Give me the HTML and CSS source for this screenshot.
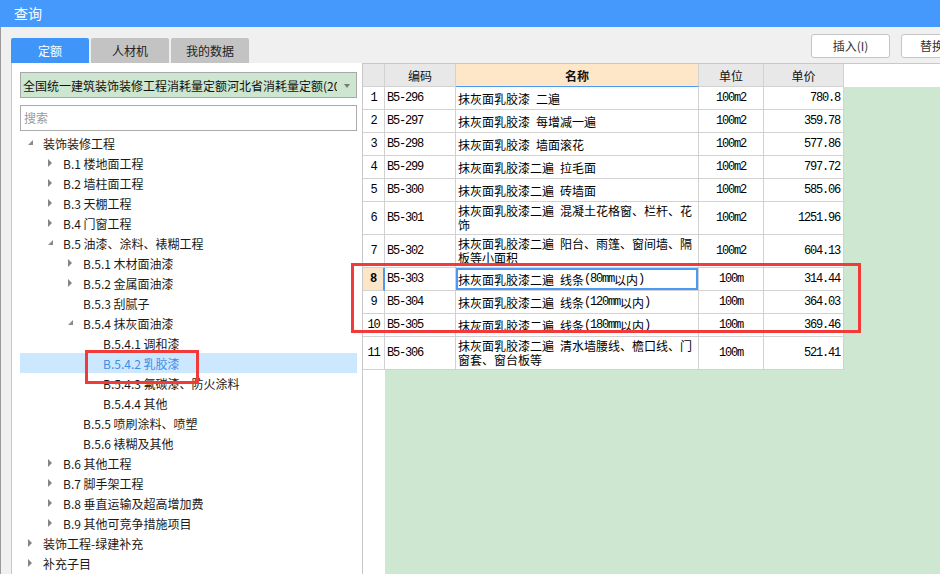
FILE: index.html
```html
<!DOCTYPE html>
<html lang="zh-CN">
<head>
<meta charset="utf-8">
<title>查询</title>
<link rel="stylesheet" href="styles.css">
</head>
<body>
<div class="titlebar">查询</div>
<div class="main">
  <div class="topbar">
    <div class="tabs">
      <div class="tab active">定额</div>
      <div class="tab">人材机</div>
      <div class="tab">我的数据</div>
    </div>
    <div class="btns">
      <div class="btn">插入(I)</div>
      <div class="btn btn-short">替换</div>
    </div>
  </div>
  <div class="content">
    <div class="left">
      <div class="select"><span class="select-text">全国统一建筑装饰装修工程消耗量定额河北省消耗量定额(2012)</span><span class="caret"></span></div>
      <div class="search">搜索</div>
      <div class="tree">
        <div class="node l0"><span class="arr"><i class="open"></i></span>装饰装修工程</div>
        <div class="node l1"><span class="arr"><i class="closed"></i></span>B.1 楼地面工程</div>
        <div class="node l1"><span class="arr"><i class="closed"></i></span>B.2 墙柱面工程</div>
        <div class="node l1"><span class="arr"><i class="closed"></i></span>B.3 天棚工程</div>
        <div class="node l1"><span class="arr"><i class="closed"></i></span>B.4 门窗工程</div>
        <div class="node l1"><span class="arr"><i class="open"></i></span>B.5 油漆、涂料、裱糊工程</div>
        <div class="node l2"><span class="arr"><i class="closed"></i></span>B.5.1 木材面油漆</div>
        <div class="node l2"><span class="arr"><i class="closed"></i></span>B.5.2 金属面油漆</div>
        <div class="node l2"><span class="arr"></span>B.5.3 刮腻子</div>
        <div class="node l2"><span class="arr"><i class="open"></i></span>B.5.4 抹灰面油漆</div>
        <div class="node l3"><span class="arr"></span>B.5.4.1 调和漆</div>
        <div class="node l3 selected"><span class="arr"></span>B.5.4.2 乳胶漆</div>
        <div class="node l3"><span class="arr"></span>B.5.4.3 氟碳漆、防火涂料</div>
        <div class="node l3"><span class="arr"></span>B.5.4.4 其他</div>
        <div class="node l2"><span class="arr"></span>B.5.5 喷刷涂料、喷塑</div>
        <div class="node l2"><span class="arr"></span>B.5.6 裱糊及其他</div>
        <div class="node l1"><span class="arr"><i class="closed"></i></span>B.6 其他工程</div>
        <div class="node l1"><span class="arr"><i class="closed"></i></span>B.7 脚手架工程</div>
        <div class="node l1"><span class="arr"><i class="closed"></i></span>B.8 垂直运输及超高增加费</div>
        <div class="node l1"><span class="arr"><i class="closed"></i></span>B.9 其他可竞争措施项目</div>
        <div class="node l0"><span class="arr"><i class="closed"></i></span>装饰工程-绿建补充</div>
        <div class="node l0"><span class="arr"><i class="closed"></i></span>补充子目</div>
      </div>
    </div>
    <div class="right">
      <div class="thead">
        <div class="grid">
          <div class="c h"></div>
          <div class="c h center">编码</div>
          <div class="c h center name-h">名称</div>
          <div class="c h center">单位</div>
          <div class="c h center">单价</div>
        </div>
      </div>
      <div class="grid tbody">
        <div class="c num">1</div><div class="c code">B5-296</div><div class="c name">抹灰面乳胶漆&ensp;二遍</div><div class="c unit">100m2</div><div class="c price">780.8</div>
        <div class="c num">2</div><div class="c code">B5-297</div><div class="c name">抹灰面乳胶漆&ensp;每增减一遍</div><div class="c unit">100m2</div><div class="c price">359.78</div>
        <div class="c num">3</div><div class="c code">B5-298</div><div class="c name">抹灰面乳胶漆&ensp;墙面滚花</div><div class="c unit">100m2</div><div class="c price">577.86</div>
        <div class="c num">4</div><div class="c code">B5-299</div><div class="c name">抹灰面乳胶漆二遍&ensp;拉毛面</div><div class="c unit">100m2</div><div class="c price">797.72</div>
        <div class="c num">5</div><div class="c code">B5-300</div><div class="c name">抹灰面乳胶漆二遍&ensp;砖墙面</div><div class="c unit">100m2</div><div class="c price">585.06</div>
        <div class="c num tall">6</div><div class="c code tall">B5-301</div><div class="c name tall"><span class="ln">抹灰面乳胶漆二遍&ensp;混凝土花格窗、栏杆、花</span><span class="ln">饰</span></div><div class="c unit tall">100m2</div><div class="c price tall">1251.96</div>
        <div class="c num tall">7</div><div class="c code tall">B5-302</div><div class="c name tall"><span class="ln">抹灰面乳胶漆二遍&ensp;阳台、雨篷、窗间墙、隔</span><span class="ln">板等小面积</span></div><div class="c unit tall">100m2</div><div class="c price tall">604.13</div>
        <div class="c num cur">8</div><div class="c code">B5-303</div><div class="c name sel">抹灰面乳胶漆二遍&ensp;线条<span class="m">(80mm</span>以内<span class="m">)</span></div><div class="c unit">100m</div><div class="c price">314.44</div>
        <div class="c num">9</div><div class="c code">B5-304</div><div class="c name">抹灰面乳胶漆二遍&ensp;线条<span class="m">(120mm</span>以内<span class="m">)</span></div><div class="c unit">100m</div><div class="c price">364.03</div>
        <div class="c num">10</div><div class="c code">B5-305</div><div class="c name">抹灰面乳胶漆二遍&ensp;线条<span class="m">(180mm</span>以内<span class="m">)</span></div><div class="c unit">100m</div><div class="c price">369.46</div>
        <div class="c num tall">11</div><div class="c code tall">B5-306</div><div class="c name tall"><span class="ln">抹灰面乳胶漆二遍&ensp;清水墙腰线、檐口线、门</span><span class="ln">窗套、窗台板等</span></div><div class="c unit tall">100m</div><div class="c price tall">521.41</div>
      </div>
    </div>
  </div>
</div>
<div class="mark mark-tree"></div>
<div class="mark mark-table"></div>
</body>
</html>
```

FILE: styles.css
```css
* { box-sizing: border-box; }
html, body { margin: 0; padding: 0; }
body {
  width: 940px;
  height: 574px;
  overflow: hidden;
  position: relative;
  background: #f0f0f0;
  font-family: "Noto Sans CJK SC", "Microsoft YaHei", sans-serif;
  font-size: 12px;
  color: #1a1a1a;
}
.titlebar {
  height: 27px;
  background: #4598fc;
  color: #fff;
  font-size: 14px;
  line-height: 27px;
  padding-left: 14px;
}
.main {
  height: 547px;
  border-left: 1px solid #9a9a9a;
  display: flex;
  flex-direction: column;
}
.topbar {
  height: 36px;
  display: flex;
  flex-shrink: 0;
}
.tabs {
  display: flex;
  align-items: flex-end;
  gap: 2px;
  margin-left: 10px;
}
.tab {
  width: 78px;
  height: 25px;
  line-height: 25px;
  text-align: center;
  background: #c3c3c3;
  color: #222;
  border-radius: 2px 2px 0 0;
  font-size: 12px;
}
.tab.active {
  background: #3f96f8;
  color: #fff;
}
.btns {
  display: flex;
  gap: 11px;
  margin-left: auto;
  margin-right: -23px;
  padding-top: 7px;
  flex-shrink: 0;
}
.btn {
  width: 79px;
  height: 24px;
  line-height: 22px;
  text-align: center;
  background: #fff;
  border: 1px solid #c4c4c4;
  border-radius: 3px;
  color: #333;
  font-size: 12px;
}
.btn.btn-short { width: 62px; }
.content {
  flex: 1;
  display: flex;
  min-height: 0;
}
.left {
  width: 351px;
  margin-left: 10px;
  border-left: 1px solid #c8c8c8;
  background: #fff;
  padding: 9px 5px 0 8px;
  flex-shrink: 0;
}
.select {
  height: 26px;
  background: #cde6d0;
  border: 1px solid #a8a8a8;
  display: flex;
  align-items: center;
  padding-left: 2px;
  position: relative;
}
.select-text {
  width: 314px;
  overflow: hidden;
  white-space: nowrap;
  color: #111;
}
.caret {
  position: absolute;
  right: 6px;
  top: 11px;
  width: 0;
  height: 0;
  border-left: 3px solid transparent;
  border-right: 3px solid transparent;
  border-top: 4px solid #7a7a7a;
}
.search {
  margin-top: 7px;
  height: 26px;
  border: 1px solid #ababab;
  line-height: 24px;
  padding-left: 3px;
  color: #9a9a9a;
}
.tree {
  margin-top: 2px;
}
.node {
  height: 20px;
  display: flex;
  align-items: center;
  white-space: nowrap;
  color: #1a1a1a;
}
.node.l0 { padding-left: 4px; }
.node.l1 { padding-left: 24px; }
.node.l2 { padding-left: 44px; }
.node.l3 { padding-left: 64px; }
.node.selected {
  background: #cce8ff;
  color: #3d8ee8;
}
.arr {
  width: 19px;
  height: 20px;
  flex-shrink: 0;
  position: relative;
}
.arr i {
  position: absolute;
  width: 0;
  height: 0;
  border-style: solid;
}
.arr i.closed {
  left: 4px;
  top: 6px;
  border-width: 4px 0 4px 4px;
  border-color: transparent transparent transparent #848484;
}
.arr i.open {
  left: 4px;
  top: 7px;
  border-width: 0 0 5px 5px;
  border-color: transparent transparent #8a8a8a transparent;
}
.right {
  flex: 1;
  border-left: 1px solid #c8c8c8;
  border-top: 1px solid #c8c8c8;
  background: linear-gradient(to right, #fff 22px, #cde7d1 22px);
  display: flex;
  flex-direction: column;
  min-width: 0;
}
.thead {
  background: #fff;
}
.grid {
  display: grid;
  grid-template-columns: 22px 71px 243px 65px 80px;
  width: 481px;
}
.c {
  border-right: 1px solid #d2d2d2;
  border-bottom: 1px solid #d2d2d2;
  height: 23px;
  display: flex;
  align-items: center;
  background: #fff;
  overflow: hidden;
  white-space: nowrap;
}
.c.tall { height: 33px; }
.c.h {
  background: #e8e8e8;
  color: #111;
  font-size: 12px;
}
.center { justify-content: center; }
.c.name-h {
  background: #fee6c9;
  font-weight: bold;
  border-bottom-color: #4a9af5;
}
.num, .code, .unit, .price, .m {
  font-family: "Liberation Mono", "DejaVu Sans Mono", monospace;
  font-size: 12px;
  letter-spacing: -1.2px;
  color: #000;
}
.num { justify-content: center; }
.num.cur {
  background: #fde6c8;
  font-weight: bold;
  border-right: 2px solid #4a9af5;
}
.code { padding-left: 2px; }
.name {
  padding-left: 2px;
  color: #000;
  white-space: nowrap;
}
.name.tall {
  flex-direction: column;
  align-items: flex-start;
  justify-content: center;
}
.ln {
  display: block;
  height: 14px;
  line-height: 14px;
}
.name.sel {
  box-shadow: inset 0 0 0 2px #4b9af5;
}
.unit { justify-content: center; }
.price { justify-content: flex-end; padding-right: 3px; }
.mark {
  position: absolute;
  border: 3px solid #f23a3a;
  pointer-events: none;
}
.mark-tree {
  left: 85px;
  top: 350px;
  width: 114px;
  height: 34px;
}
.mark-table {
  left: 351px;
  top: 263px;
  width: 510px;
  height: 70px;
}
```
